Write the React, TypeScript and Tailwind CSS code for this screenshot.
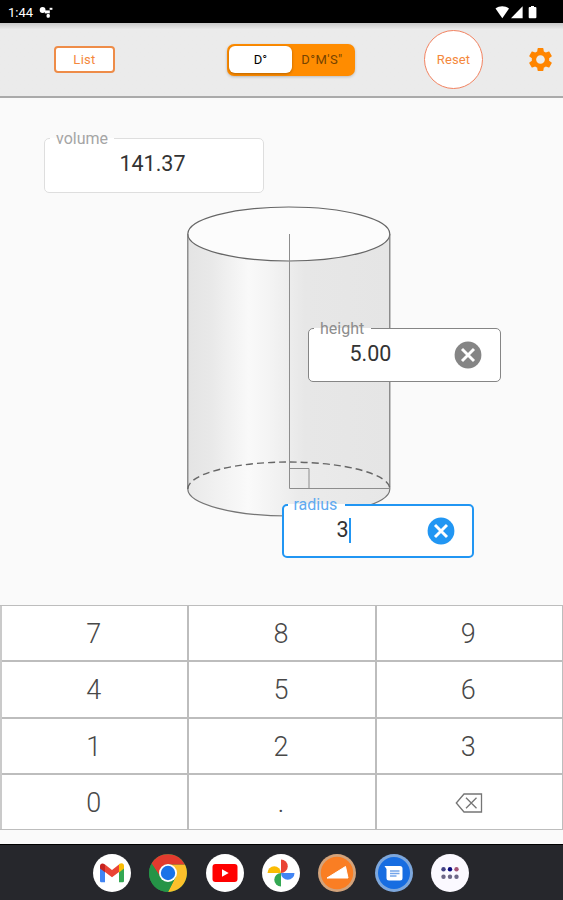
import React from "react";

const keys = ["7", "8", "9", "4", "5", "6", "1", "2", "3", "0", ".", "back"];

function StatusBar() {
  return (
    <div className="flex h-[23px] shrink-0 items-center bg-black pl-[8px] pr-[25px] text-white">
      <span className="w-[27px] pt-[2px] text-[13px] leading-none">1:44</span>
      <svg className="ml-[4px] mt-px" width="15" height="13" viewBox="0 0 15 13" fill="#fff">
        <circle cx="3.6" cy="4" r="2.9" />
        <rect x="5.8" y="4.4" width="5" height="3" />
        <rect x="7.6" y="8" width="3.2" height="3.8" rx="1.2" />
        <rect x="10.6" y="1.8" width="2.8" height="2" />
      </svg>
      <svg className="ml-auto" width="44" height="14" viewBox="0 0 44 14" fill="#fff">
        <path d="M1.5 3.6C5.5.5 11 .5 15 3.6L8.3 13.2Z" />
        <path d="M28.6 1.2V13.2H17Z" />
        <path d="M37 2V.9h3V2h1.4q1 0 1 1v9.2q0 1-1 1h-5.7q-1 0-1-1V3q0-1 1-1Z" />
      </svg>
    </div>
  );
}

function Toolbar() {
  return (
    <header className="relative z-10 flex h-[75px] shrink-0 items-center border-b-2 border-[#aaaaaa] bg-gradient-to-b from-[#c9c9c9] via-[#ebebeb] via-[9%] to-[#ebebeb] pl-[54px] text-[#f4883c]">
      <button className="h-[27px] w-[61px] rounded-[4px] border-2 border-[#ee8c48] bg-white text-[13px] leading-none tracking-[0.3px]">List</button>
      <div className="ml-[112px] flex h-[32px] w-[128px] items-center rounded-[7px] bg-[#ff8c00] p-[2px] text-[13px] text-black shadow-[0_1px_3px_rgba(0,0,0,0.2)]">
        <span className="flex h-[27px] w-[63px] items-center justify-center rounded-[6px] bg-white shadow-[0_1px_3px_rgba(0,0,0,0.3)]">D°</span>
        <span className="flex-1 pr-px text-center tracking-[0.4px] text-[#754300]">D°M'S"</span>
      </div>
      <button className="ml-[69px] size-[59px] rounded-full border border-[#f28361] bg-white text-[13px] leading-none tracking-[0.1px]">Reset</button>
      <svg className="ml-[43px]" width="29" height="29" viewBox="0 0 24 24" fill="#ff8500">
        <path d="M19.14 12.94c.04-.3.06-.61.06-.94 0-.32-.02-.64-.07-.94l2.03-1.58c.18-.14.23-.41.12-.61l-1.92-3.32c-.12-.22-.37-.29-.59-.22l-2.39.96c-.5-.38-1.03-.7-1.62-.94l-.36-2.54c-.04-.24-.24-.41-.48-.41h-3.84c-.24 0-.43.17-.47.41l-.36 2.54c-.59.24-1.13.57-1.62.94l-2.39-.96c-.22-.08-.47 0-.59.22L2.74 8.87c-.12.21-.08.47.12.61l2.03 1.58c-.05.3-.09.63-.09.94s.02.64.07.94l-2.03 1.58c-.18.14-.23.41-.12.61l1.92 3.32c.12.22.37.29.59.22l2.39-.96c.5.38 1.03.7 1.62.94l.36 2.54c.05.24.24.41.48.41h3.84c.24 0 .44-.17.47-.41l.36-2.54c.59-.24 1.13-.56 1.62-.94l2.39.96c.22.08.47 0 .59-.22l1.92-3.32c.12-.22.07-.47-.12-.61l-2.01-1.58zM12 15.6c-1.98 0-3.6-1.62-3.6-3.6s1.62-3.6 3.6-3.6 3.6 1.62 3.6 3.6-1.62 3.6-3.6 3.6z" />
      </svg>
    </header>
  );
}

function Clear({ color }: { color: string }) {
  return (
    <svg width="28" height="28" viewBox="0 0 28 28">
      <circle cx="14" cy="14" r="13.4" fill={color} />
      <path d="M8 8l12 12M20 8L8 20" stroke="#fff" strokeWidth="2.9" />
    </svg>
  );
}

function Cylinder() {
  return (
    <svg className="absolute left-[180px] top-[102px]" width="220" height="325" viewBox="180 200 220 325" fill="none">
      <defs>
        <linearGradient id="body" x1="0" x2="1">
          <stop offset="0" stopColor="#e4e4e4" />
          <stop offset=".12" stopColor="#e9e9e9" />
          <stop offset=".3" stopColor="#f9f9f9" />
          <stop offset=".4" stopColor="#f4f4f4" />
          <stop offset=".58" stopColor="#e7e7e7" />
          <stop offset="1" stopColor="#e5e5e5" />
        </linearGradient>
        <linearGradient id="base" x1="0" x2="1">
          <stop offset="0" stopColor="#e9e9e9" />
          <stop offset=".3" stopColor="#fafafa" />
          <stop offset=".55" stopColor="#ebebeb" />
          <stop offset="1" stopColor="#e7e7e7" />
        </linearGradient>
      </defs>
      <path d="M187.8 234V489A101 27 0 0 0 389.8 489V234Z" fill="url(#body)" />
      <ellipse cx="288.8" cy="489" rx="101" ry="27" fill="url(#base)" />
      <ellipse cx="288.8" cy="234" rx="101" ry="27" fill="#fcfcfc" stroke="#666" strokeWidth="1.2" />
      <path d="M187.8 234V489A101 27 0 0 0 389.8 489V234" stroke="#757575" strokeWidth="1.2" />
      <path d="M187.8 489A101 27 0 0 1 389.8 489" stroke="#666" strokeWidth="1.4" strokeDasharray="7 4" />
      <path d="M289.5 234V488.5H389.8M289.5 468.5H309V488.5" stroke="#8d8d8d" />
    </svg>
  );
}

function Workspace() {
  return (
    <main className="relative h-[507px] shrink-0 bg-[#fafafa]">
      <Cylinder />
      <fieldset className="absolute left-[44px] top-[40px] h-[55px] w-[220px] rounded-[5px] border border-[#dedede] bg-white">
        <span className="absolute left-[5px] top-[-10px] h-[19px] w-[64px] bg-gradient-to-b from-transparent from-[9px] to-white to-[9px] pl-[6px] text-[16px] leading-[19px] text-[#a5a5a5]">volume</span>
        <span className="block w-[214px] pl-px pt-[10px] text-center text-[21.5px] leading-[30px] text-[#333]">141.37</span>
      </fieldset>
      <div className="absolute left-[308px] top-[230px] flex h-[54px] w-[193px] items-center rounded-[5px] border border-[#858585] bg-white">
        <span className="absolute left-[5px] top-[-10px] h-[19px] w-[57px] bg-gradient-to-b from-transparent from-[9px] to-white to-[9px] pl-[6px] text-[16px] leading-[19px] text-[#8d8d8d]">height</span>
        <span className="w-[123px] pb-[2px] text-center text-[21.5px] leading-[30px] text-[#333]">5.00</span>
        <span className="ml-[22px]"><Clear color="#858585" /></span>
      </div>
      <div className="absolute left-[281.5px] top-[406px] flex h-[54px] w-[192px] items-center rounded-[5px] border-2 border-[#2196f3] bg-white">
        <span className="absolute left-[4px] top-[-11px] h-[19px] w-[57px] bg-gradient-to-b from-transparent from-[9px] to-white to-[9px] pl-[6px] text-[16px] leading-[19px] text-[#5faaf0]">radius</span>
        <span className="flex w-[143px] items-center pb-[2px] pl-[53px] text-[21.5px] leading-[30px] text-[#333]">3<i className="h-[25px] w-[2.5px] bg-[#2196f3]" /></span>
        <Clear color="#2196f3" />
      </div>
    </main>
  );
}

function Keypad() {
  return (
    <section className="h-[225px] shrink-0 border-b border-r border-t border-[#bdbdbd] bg-white">
      <div className="grid h-full grid-cols-3 grid-rows-4 gap-[2px] border-l-2 border-[#cacaca] bg-[#bdbdbd]">
        {keys.map((k) => (
          <button key={k} className="flex items-center justify-center bg-white pr-[2px] pt-[3px] text-[27px] font-light leading-none text-[#484848]">
            {k === "back" ? (
              <svg className="ml-[2px]" width="28" height="20" viewBox="0 0 28 20" fill="none" stroke="#757575" strokeWidth="1.3">
                <path d="M1.3 10L9 1H26.5V19H9Z" />
                <path d="M11 4.7l10.5 10.6M21.5 4.7L11 15.3" />
              </svg>
            ) : k}
          </button>
        ))}
      </div>
    </section>
  );
}

function Dock() {
  return (
    <nav className="mt-[14px] flex h-[56px] items-center justify-center gap-[18.3px] border-t border-black bg-[#26272c] pr-px">
      <svg width="38" height="38" viewBox="0 0 38 38">
        <circle cx="19" cy="19" r="19" fill="#fff" />
        <path d="M7 13v14q0 1.3 1.3 1.3H12V17Z" fill="#4285f4" />
        <path d="M31 13v14q0 1.3-1.3 1.3H26V17Z" fill="#34a853" />
        <path d="M26 12v6.5l5-4V12c0-3-2.5-3.5-5-2Z" fill="#fbbc04" />
        <path d="M12 10.5l7 5.5 7-5.5v7.5l-7 5.3-7-5.3Z" fill="#ea4335" />
        <path d="M7 12v2.5l5 3.7v-7.7C9.5 8.5 7 9.5 7 12Z" fill="#c5221f" />
      </svg>
      <svg width="38" height="38" viewBox="0 0 38 38">
        <circle cx="19" cy="19" r="19" fill="#259447" />
        <path d="M19 19V10.5H35.9A19 19 0 0 1 19 38L26.5 23.2Z" fill="#fcc02b" />
        <path d="M2.6 9.5A19 19 0 0 1 35.9 10.5H19A8.5 8.5 0 0 0 11.6 23.2Z" fill="#e33b2e" />
        <path d="M2.6 9.5L11.6 23.2L19 27.5L26.5 23.2L19 38A19 19 0 0 1 2.6 9.5Z" fill="#259447" />
        <circle cx="19" cy="19" r="9" fill="#fff" />
        <circle cx="19" cy="19" r="7.2" fill="#1a73e8" />
      </svg>
      <svg width="38" height="38" viewBox="0 0 38 38">
        <circle cx="19" cy="19" r="19" fill="#fff" />
        <rect x="6.5" y="10" width="25" height="18" rx="3" fill="#f00" />
        <path d="M16 15.2v7.6l6.7-3.8Z" fill="#fff" />
      </svg>
      <svg width="38" height="38" viewBox="0 0 38 38">
        <circle cx="19" cy="19" r="19" fill="#fff" />
        <path d="M19 5.5A6.75 6.75 0 0 1 19 19Z" fill="#ea4335" />
        <path d="M32.5 19A6.75 6.75 0 0 1 19 19Z" fill="#4285f4" />
        <path d="M19 32.5A6.75 6.75 0 0 1 19 19Z" fill="#34a853" />
        <path d="M5.5 19A6.75 6.75 0 0 1 19 19Z" fill="#fbbc04" />
      </svg>
      <svg width="38" height="38" viewBox="0 0 38 38">
        <circle cx="19" cy="19" r="19" fill="#d3a37b" />
        <circle cx="19" cy="19" r="16.2" fill="#fa7e23" />
        <path d="M9 24L27.5 12.5L30 24Z" fill="#fff" stroke="#fff" strokeLinejoin="round" />
      </svg>
      <svg width="38" height="38" viewBox="0 0 38 38">
        <circle cx="19" cy="19" r="19" fill="#7da7dc" />
        <circle cx="19" cy="19" r="16" fill="#176de1" />
        <path d="M9.5 12H25q2.5 0 2.5 2.5V24q0 2.5-2.5 2.5H14q-2.5 0-2.5-2.5V15Z" fill="#fff" />
        <path d="M15 17h9.5M15 19.5h9.5M15 22h6.5" stroke="#73a5ea" strokeWidth="1.3" />
      </svg>
      <svg width="38" height="38" viewBox="0 0 38 38">
        <circle cx="19" cy="19" r="19" fill="#fbf9ff" />
        <circle cx="12.5" cy="15.2" r="2.2" fill="#424184" />
        <circle cx="19" cy="15.2" r="2.2" fill="#08087f" />
        <circle cx="25.5" cy="15.2" r="2.2" fill="#a35477" />
        <g fill="#6d6787"><circle cx="12.5" cy="22.8" r="2.2" /><circle cx="19" cy="22.8" r="2.2" /><circle cx="25.5" cy="22.8" r="2.2" /></g>
      </svg>
    </nav>
  );
}

export default function App() {
  return (
    <div className="flex h-[900px] w-[563px] flex-col overflow-hidden bg-[#fafafa] font-[Roboto,sans-serif]">
      <StatusBar />
      <Toolbar />
      <Workspace />
      <Keypad />
      <Dock />
    </div>
  );
}
